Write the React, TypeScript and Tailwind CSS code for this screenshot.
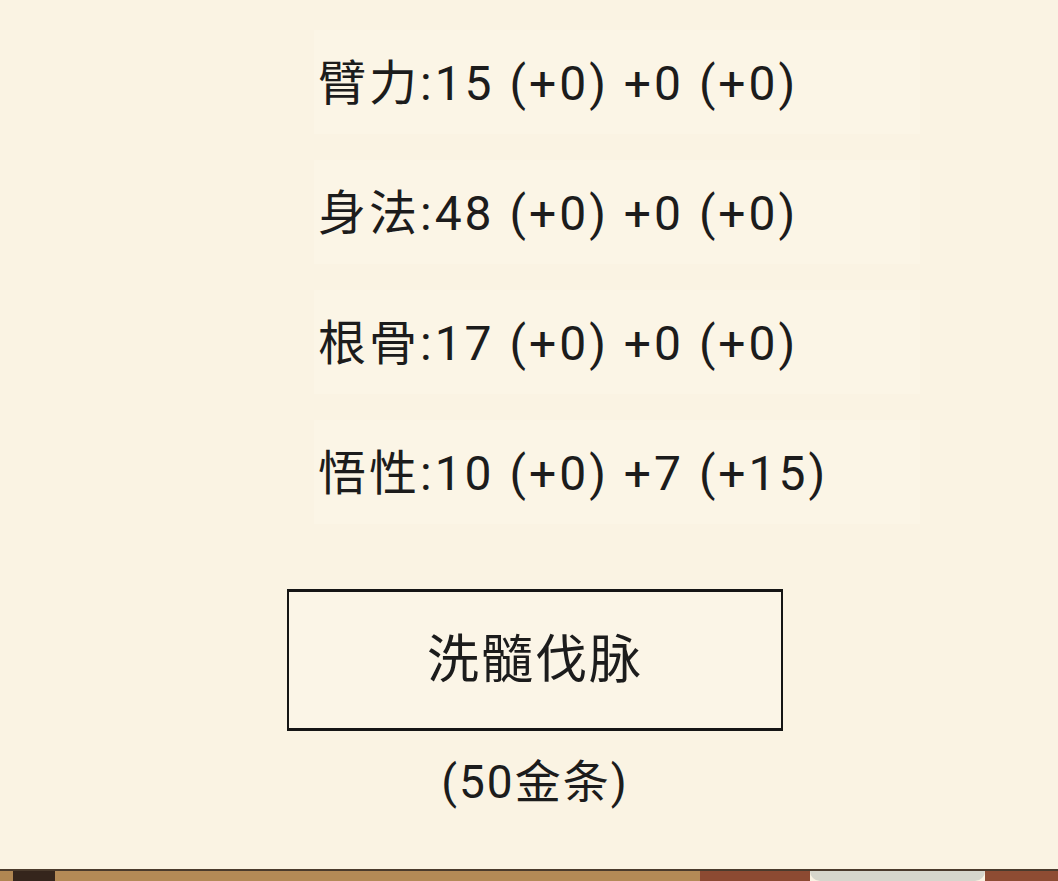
import React from 'react';

interface Stat {
  label: string;
  base: number;
  baseBonus: number;
  extra: number;
  extraBonus: number;
}

const stats: Stat[] = [
  { label: '臂力', base: 15, baseBonus: 0, extra: 0, extraBonus: 0 },
  { label: '身法', base: 48, baseBonus: 0, extra: 0, extraBonus: 0 },
  { label: '根骨', base: 17, baseBonus: 0, extra: 0, extraBonus: 0 },
  { label: '悟性', base: 10, baseBonus: 0, extra: 7, extraBonus: 15 },
];

const StatRow: React.FC<{ stat: Stat }> = ({ stat }) => (
  <div className="h-[104px] flex items-center pl-[4px] pt-[4px] bg-[#fbf5e6]">
    <span className="text-[48px] leading-none tracking-[3px]">
      {stat.label}:{stat.base} (+{stat.baseBonus}) +{stat.extra} (+{stat.extraBonus})
    </span>
  </div>
);

export default function App() {
  return (
    <div className="w-[1058px] h-[881px] bg-[#faf3e3] flex flex-col overflow-hidden text-[#1c1c1c] font-['Roboto','Noto_Sans_CJK_SC',sans-serif]">
      <div className="flex-1 flex flex-col pt-[30px]">
        {/* attribute list */}
        <div className="flex flex-col gap-[26px] ml-[314px] w-[606px]">
          {stats.map((s) => (
            <StatRow key={s.label} stat={s} />
          ))}
        </div>

        {/* refine button */}
        <button className="ml-[287px] mt-[65px] w-[496px] h-[142px] border-[#151515] border-t-[3px] border-b-[3px] border-l-[2px] border-r-[2px] flex items-center justify-center pt-[2px] bg-[#fbf5e7]">
          <span className="text-[52px] leading-none tracking-[2px]">洗髓伐脉</span>
        </button>
        <div className="ml-[287px] w-[496px] mt-[22px] text-center text-[46px] leading-[1.3] tracking-[2px]">
          (50金条)
        </div>
      </div>

      {/* scene peeking below the panel */}
      <div className="h-[12px] flex border-t-[2px] border-[#4a3a2c]">
        <div className="w-[13px] bg-[#b08652]" />
        <div className="w-[42px] bg-[#35251c]" />
        <div className="w-[645px] bg-[#b48a56]" />
        <div className="w-[110px] bg-[#8c4a32]" />
        <div className="w-[175px] bg-[#d6d6cc] rounded-b-full" />
        <div className="flex-1 bg-[#8e4c33]" />
      </div>
    </div>
  );
}
